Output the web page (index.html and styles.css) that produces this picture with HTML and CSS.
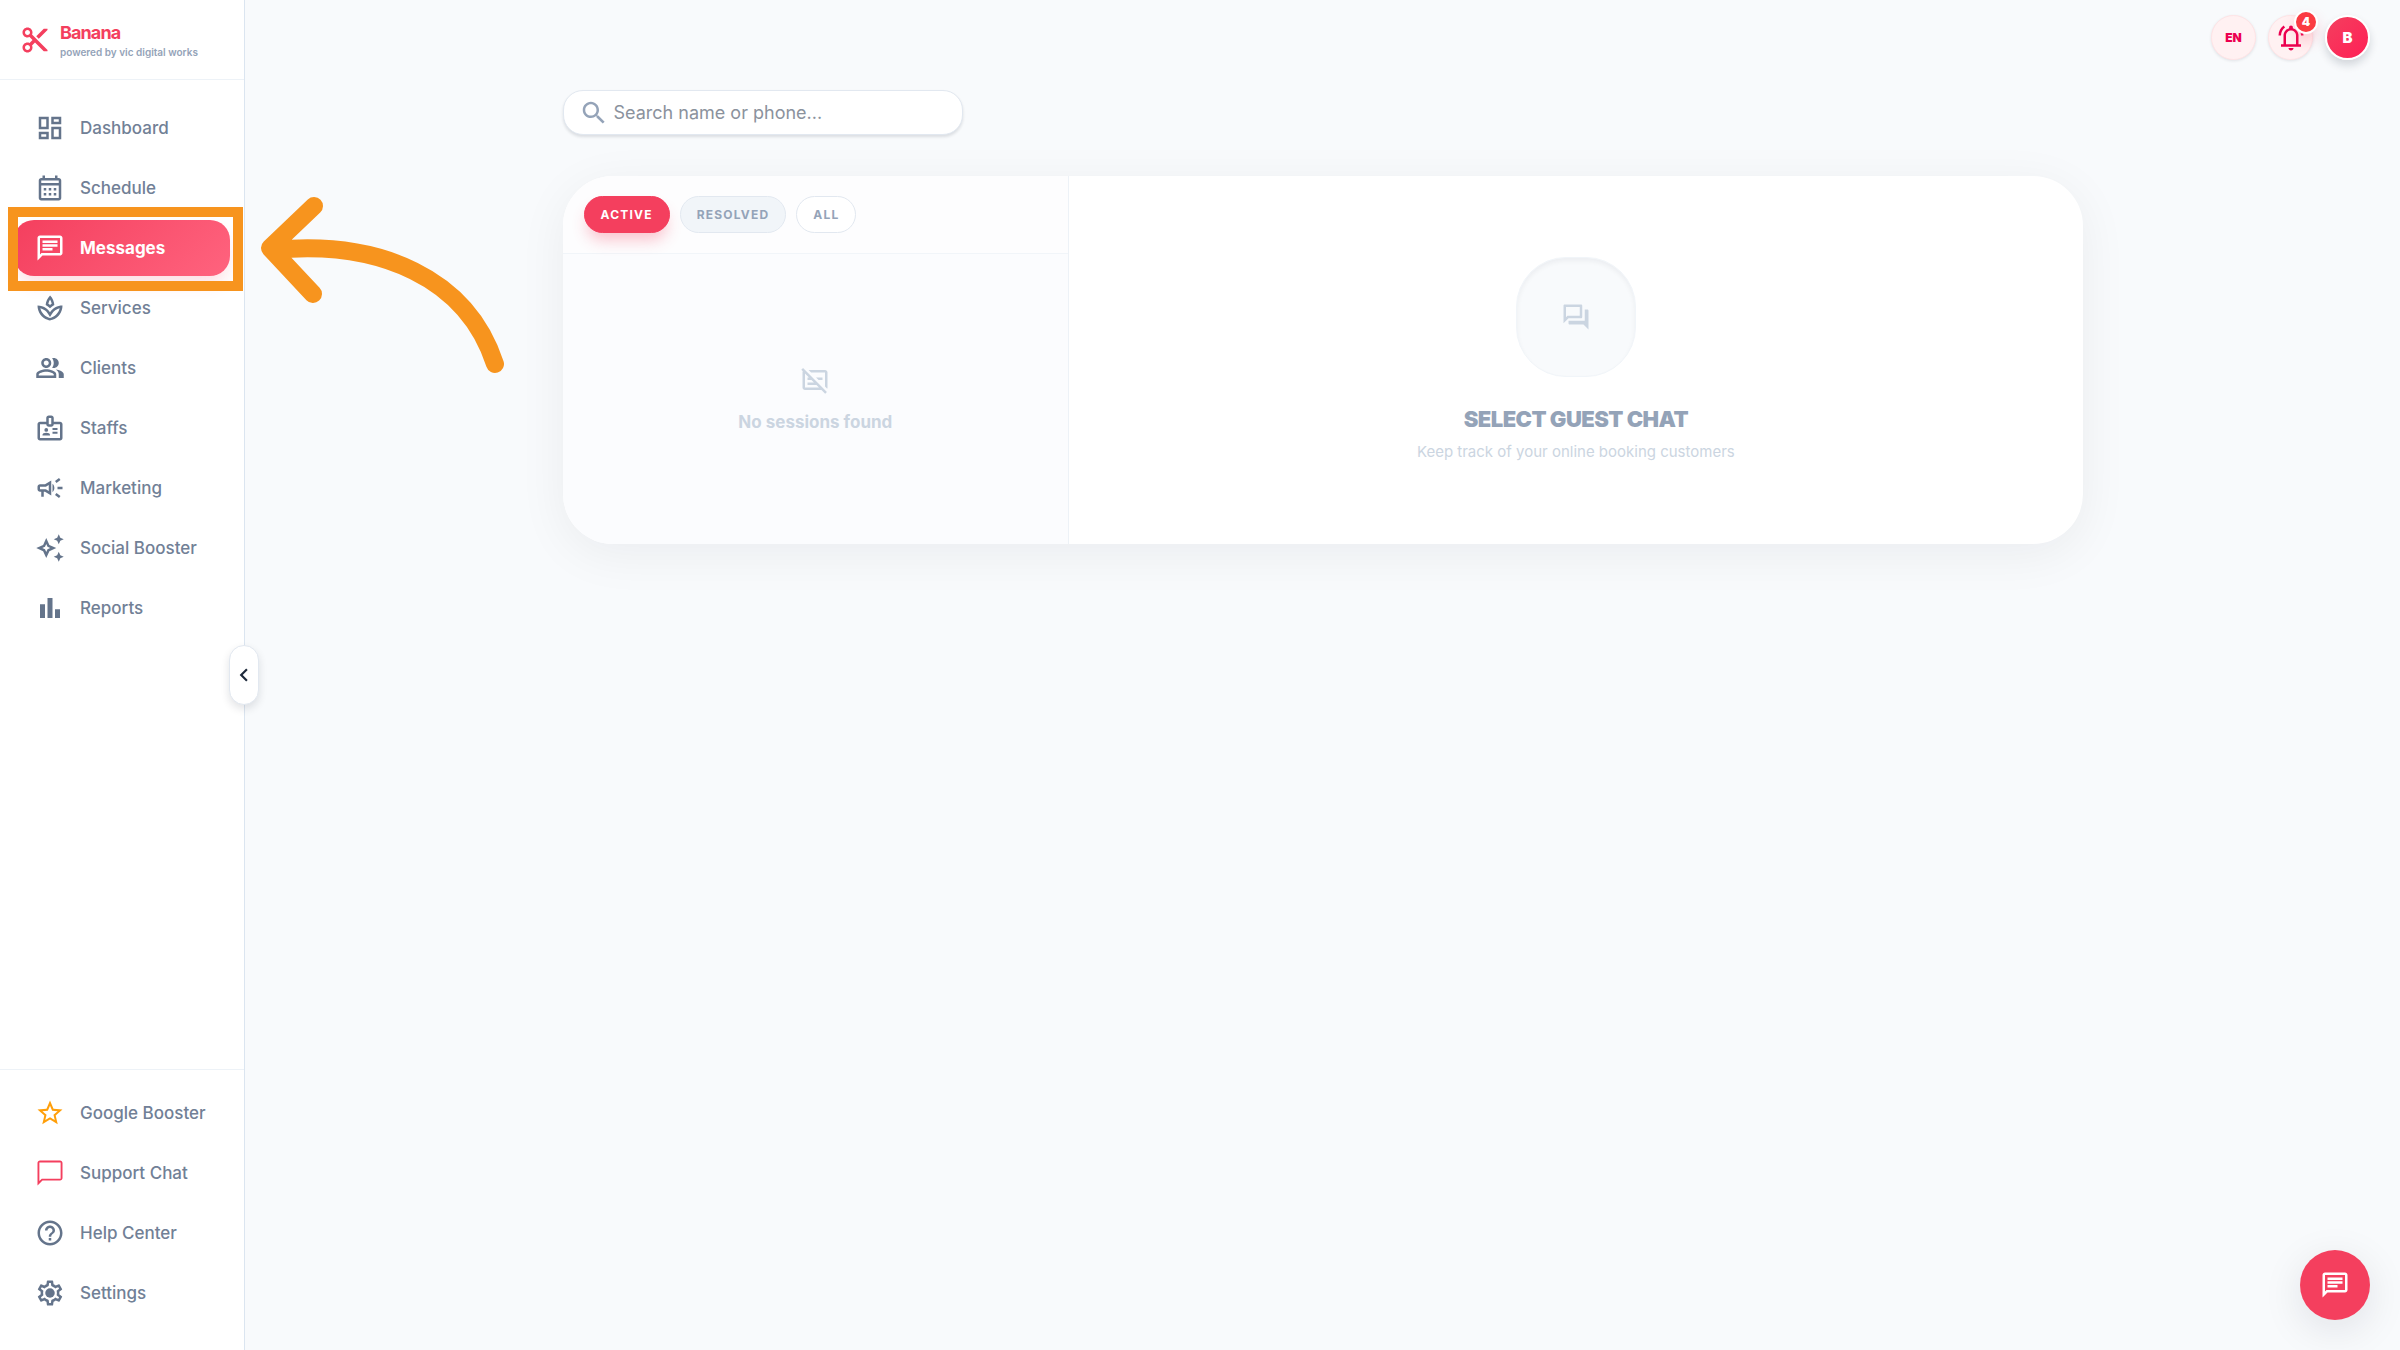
FILE: index.html
```html
<!DOCTYPE html>
<html lang="en">
<head>
<meta charset="utf-8">
<title>Banana – Messages</title>
<link rel="stylesheet" href="styles.css">
</head>
<body>
<div class="app">
  <aside class="sidebar">
    <header class="brand">
      <svg class="icon brand-icon" viewBox="0 0 24 24"><path d="M9.64 7.64c.23-.5.36-1.05.36-1.64 0-2.21-1.79-4-4-4S2 3.790 2 6s1.790 4 4 4c.59 0 1.140-.13 1.640-.36L10 12l-2.360 2.360C7.140 14.130 6.590 14 6 14c-2.210 0-4 1.790-4 4s1.790 4 4 4 4-1.790 4-4c0-.59-.13-1.140-.36-1.640L12 14l7 7h3v-1L9.640 7.640zM6 8c-1.100 0-2-.89-2-2s.9-2 2-2 2 .89 2 2-.9 2-2 2zm0 12c-1.100 0-2-.89-2-2s.9-2 2-2 2 .89 2 2-.9 2-2 2zM19 3l-6 6 2 2 7-7V3z"/></svg>
      <div class="brand-text">
        <strong class="brand-name">Banana</strong>
        <span class="brand-tag">powered by vic digital works</span>
      </div>
    </header>
    <nav class="nav">
      <a class="nav-item" href="#"><svg class="icon" viewBox="0 0 24 24"><path d="M19 5v2h-4V5h4M9 5v6H5V5h4m10 8v6h-4v-6h4M9 17v2H5v-2h4M21 3h-8v6h8V3zM11 3H3v10h8V3zm10 8h-8v10h8V11zm-10 4H3v6h8v-6z"/></svg>Dashboard</a>
      <a class="nav-item" href="#"><svg class="icon" viewBox="0 0 24 24"><path d="M19 4h-1V2h-2v2H8V2H6v2H5c-1.110 0-2 .9-2 2v14c0 1.100.89 2 2 2h14c1.100 0 2-.9 2-2V6c0-1.100-.9-2-2-2zm0 16H5V10h14v10zm0-12H5V6h14v2zM7 12h2v2H7zm4 0h2v2h-2zm4 0h2v2h-2zM7 16h2v2H7zm4 0h2v2h-2zm4 0h2v2h-2z"/></svg>Schedule</a>
      <a class="nav-item active" href="#" aria-current="page"><svg class="icon" viewBox="0 0 24 24"><path d="M4 4h16v12H5.170L4 17.170V4m0-2c-1.100 0-1.990.9-1.990 2L2 22l4-4h14c1.100 0 2-.9 2-2V4c0-1.100-.9-2-2-2H4zm2 10h8v2H6v-2zm0-3h12v2H6V9zm0-3h12v2H6V6z"/></svg>Messages</a>
      <a class="nav-item" href="#"><svg class="icon" viewBox="0 0 24 24"><path d="M15.490 9.630c-.18-2.790-1.310-5.510-3.430-7.630-2.140 2.140-3.320 4.860-3.550 7.630 1.280.68 2.460 1.560 3.490 2.630 1.030-1.060 2.210-1.940 3.490-2.630zm-3.440-4.440c.63 1.030 1.070 2.180 1.300 3.380-.47.3-.91.63-1.340.98-.42-.34-.87-.67-1.330-.97.25-1.200.71-2.350 1.370-3.390zM12 15.450c-.82-1.250-1.860-2.340-3.060-3.200-.13-.09-.27-.16-.4-.26.13.09.27.17.39.25C6.980 10.830 4.590 10 2 10c0 5.320 3.360 9.820 8.030 11.490.63.23 1.290.4 1.970.51.68-.12 1.330-.29 1.970-.51C18.640 19.820 22 15.320 22 10c-4.180 0-7.850 2.170-10 5.450zm1.320 4.150c-.44.15-.88.27-1.330.37-.44-.09-.87-.21-1.280-.36-3.290-1.180-5.700-3.990-6.450-7.350 1.100.26 2.150.71 3.120 1.330l-.02.01c.13.09.26.18.39.25l.07.04c.99.72 1.840 1.610 2.510 2.650L12 19.100l1.670-2.550c.69-1.050 1.550-1.950 2.530-2.660l.07-.05c.09-.05.18-.11.27-.17l-.01-.02c.98-.65 2.070-1.130 3.210-1.400-.75 3.370-3.150 6.180-6.420 7.350z"/></svg>Services</a>
      <a class="nav-item" href="#"><svg class="icon" viewBox="0 0 24 24"><path d="M9 12c2.210 0 4-1.790 4-4s-1.790-4-4-4-4 1.790-4 4 1.790 4 4 4zm0-6c1.100 0 2 .9 2 2s-.9 2-2 2-2-.9-2-2 .9-2 2-2zm0 7c-2.670 0-8 1.340-8 4v3h16v-3c0-2.660-5.330-4-8-4zm6 5H3v-.99C3.200 16.290 6.300 15 9 15s5.800 1.290 6 2v1zm-.52-6.050C14.980 11.980 15 12 15 12c2.210 0 4-1.790 4-4s-1.790-4-4-4c-.47 0-.91.1-1.330.24C14.500 5.270 15 6.580 15 8s-.5 2.730-1.330 3.760zM16.670 13.130C18.040 14.060 19 15.320 19 17v3h4v-3c0-2.180-3.570-3.470-6.330-3.870z"/></svg>Clients</a>
      <a class="nav-item" href="#"><svg class="icon" viewBox="0 0 24 24"><path d="M20 7h-5V4c0-1.100-.9-2-2-2h-2c-1.100 0-2 .9-2 2v3H4c-1.100 0-2 .9-2 2v11c0 1.100.9 2 2 2h16c1.100 0 2-.9 2-2V9c0-1.100-.9-2-2-2zM11 4h2v5h-2V4zm9 16H4V9h5c0 1.100.9 2 2 2h2c1.100 0 2-.9 2-2h5v11z"/><circle cx="9" cy="13.500" r="1.500"/><path d="M11.080 16.180C10.440 15.900 9.740 15.750 9 15.750s-1.440.15-2.080.43c-.56.24-.92.780-.92 1.390V18h6v-.43c0-.61-.36-1.150-.92-1.390zM14 12h4v1.500h-4zm0 3h4v1.500h-4z"/></svg>Staffs</a>
      <a class="nav-item" href="#"><svg class="icon" viewBox="0 0 24 24"><path d="M18 11v2h4v-2h-4zm-2 6.610c.96.71 2.210 1.650 3.200 2.390.4-.53.8-1.070 1.200-1.600-.99-.74-2.240-1.680-3.200-2.400-.4.540-.8 1.080-1.200 1.610zM20.400 5.600c-.4-.53-.8-1.070-1.200-1.600-.99.74-2.240 1.680-3.200 2.400.4.530.8 1.070 1.200 1.600.96-.72 2.210-1.650 3.200-2.400zM4 9c-1.100 0-2 .9-2 2v2c0 1.100.9 2 2 2h1v4h2v-4h1l5 3V6L8 9H4zm5.030 1.710L11 9.530v4.940l-1.970-1.180-.48-.29H4v-2h4.550l.48-.29zM15.500 12c0-1.330-.58-2.530-1.500-3.350v6.690c.92-.81 1.500-2.010 1.500-3.340z"/></svg>Marketing</a>
      <a class="nav-item" href="#"><svg class="icon" viewBox="0 0 24 24"><path d="M19 9l1.250-2.750L23 5l-2.750-1.250L19 1l-1.250 2.750L15 5l2.750 1.250zM19 15l-1.250 2.750L15 19l2.750 1.250L19 23l1.250-2.750L23 19l-2.750-1.250zM11.500 9.500L9 4 6.500 9.500 1 12l5.500 2.500L9 20l2.500-5.500L17 12l-5.500-2.500zm-1.510 3.490L9 15.170l-.99-2.180L5.830 12l2.180-.99L9 8.830l.99 2.180 2.180.99-2.180.99z"/></svg>Social Booster</a>
      <a class="nav-item" href="#"><svg class="icon" viewBox="0 0 24 24"><path d="M4 9h4v11H4zm12 4h4v7h-4zm-6-9h4v16h-4z"/></svg>Reports</a>
    </nav>
    <nav class="nav nav-bottom">
      <a class="nav-item" href="#"><svg class="icon star" viewBox="0 0 24 24"><path d="M22 9.240l-7.190-.62L12 2 9.190 8.630 2 9.240l5.460 4.730L5.820 21 12 17.270 18.180 21l-1.630-7.030L22 9.240zM12 15.400l-3.760 2.270 1-4.280-3.320-2.880 4.380-.38L12 6.100l1.710 4.040 4.380.38-3.320 2.880 1 4.280L12 15.400z"/></svg>Google Booster</a>
      <a class="nav-item" href="#"><svg class="icon rose" viewBox="0 0 24 24"><path d="M20 2H4c-1.100 0-2 .9-2 2v18l4-4h14c1.100 0 2-.9 2-2V4c0-1.100-.9-2-2-2zm.5 14.500H5.400L3.500 18.400V3.500h17v13z"/></svg>Support Chat</a>
      <a class="nav-item" href="#"><svg class="icon" viewBox="0 0 24 24"><path d="M11 18h2v-2h-2v2zm1-16C6.480 2 2 6.480 2 12s4.480 10 10 10 10-4.480 10-10S17.520 2 12 2zm0 18c-4.410 0-8-3.590-8-8s3.590-8 8-8 8 3.590 8 8-3.590 8-8 8zm0-14c-2.210 0-4 1.790-4 4h2c0-1.100.9-2 2-2s2 .9 2 2c0 2-3 1.750-3 5h2c0-2.250 3-2.500 3-5 0-2.210-1.790-4-4-4z"/></svg>Help Center</a>
      <a class="nav-item" href="#"><svg class="icon" viewBox="0 0 24 24"><path d="M19.430 12.980c.04-.32.07-.64.07-.98s-.03-.66-.07-.98l2.110-1.650c.19-.15.24-.42.12-.64l-2-3.460c-.09-.16-.26-.25-.44-.25-.06 0-.12.01-.17.03l-2.490 1c-.52-.4-1.080-.73-1.690-.98l-.38-2.650C14.460 2.180 14.250 2 14 2h-4c-.25 0-.46.18-.49.42l-.38 2.650c-.61.25-1.170.59-1.690.98l-2.490-1c-.06-.02-.12-.03-.18-.03-.17 0-.34.09-.43.25l-2 3.460c-.13.22-.07.49.12.64l2.110 1.650c-.04.32-.07.65-.07.98s.03.66.07.98l-2.110 1.650c-.19.15-.24.42-.12.64l2 3.460c.09.16.26.25.44.25.06 0 .12-.01.17-.03l2.490-1c.52.4 1.080.73 1.690.98l.38 2.650c.03.24.24.42.49.42h4c.25 0 .46-.18.49-.42l.38-2.650c.61-.25 1.170-.59 1.690-.98l2.490 1c.06.02.12.03.18.03.17 0 .34-.09.43-.25l2-3.460c.12-.22.07-.49-.12-.64l-2.110-1.650zm-1.980-1.710c.04.31.05.52.05.73s-.02.43-.05.73l-.14 1.130.89.7 1.080.84-.7 1.210-1.270-.51-1.040-.42-.9.68c-.43.32-.84.56-1.250.73l-1.060.43-.16 1.130-.2 1.350h-1.400l-.19-1.350-.16-1.130-1.060-.43c-.43-.18-.83-.41-1.230-.71l-.91-.7-1.060.43-1.270.51-.7-1.210 1.080-.84.89-.7-.14-1.130c-.03-.31-.05-.54-.05-.74s.02-.43.05-.73l.14-1.130-.89-.7-1.080-.84.7-1.210 1.270.51 1.040.42.9-.68c.43-.32.84-.56 1.250-.73l1.060-.43.16-1.130.2-1.350h1.390l.19 1.350.16 1.130 1.060.43c.43.18.83.41 1.230.71l.91.7 1.060-.43 1.270-.51.7 1.210-1.070.85-.89.7.14 1.130z"/><circle cx="12" cy="12" r="3.800"/></svg>Settings</a>
    </nav>
    <button class="collapse" type="button" aria-label="Collapse sidebar"><svg viewBox="0 0 24 24"><path d="M15.410 7.410L14 6l-6 6 6 6 1.410-1.410L10.830 12z"/></svg></button>
  </aside>

  <main class="main">
    <div class="topbar">
      <button class="round lang" type="button">EN</button>
      <button class="round bell" type="button" aria-label="Notifications">
        <svg class="icon" viewBox="0 0 24 24"><path d="M4 19v-2h2v-7c0-1.380.42-2.610 1.250-3.690.83-1.070 1.920-1.780 3.250-2.110V3.500c0-.42.150-.77.440-1.060S11.580 2 12 2s.77.150 1.060.44.440.64.440 1.060v.7c1.330.33 2.420 1.040 3.250 2.110C17.580 7.390 18 8.620 18 10v7h2v2H4zm8 3c-.55 0-1.020-.2-1.410-.59S10 20.550 10 20h4c0 .55-.2 1.020-.59 1.410S12.550 22 12 22zm-4-5h8v-7c0-1.100-.39-2.040-1.170-2.830C14.040 6.390 13.100 6 12 6s-2.040.39-2.830 1.170C8.390 7.960 8 8.900 8 10v7zM2 10c0-1.670.37-3.200 1.110-4.590A9.760 9.760 0 0 1 6.080 1.950l1.170 1.600a8 8 0 0 0-2.370 2.790A7.800 7.800 0 0 0 4 10H2zm18 0c0-1.320-.29-2.540-.88-3.660a8 8 0 0 0-2.370-2.790l1.170-1.600a9.760 9.760 0 0 1 2.970 3.460C21.630 6.800 22 8.330 22 10h-2z"/></svg>
        <span class="badge">4</span>
      </button>
      <button class="round avatar" type="button">B</button>
    </div>

    <div class="content">
      <label class="search">
        <svg class="icon" viewBox="0 0 24 24"><path d="M15.500 14h-.79l-.28-.27C15.410 12.590 16 11.110 16 9.500 16 5.910 13.090 3 9.500 3S3 5.910 3 9.500 5.910 16 9.500 16c1.610 0 3.090-.59 4.230-1.570l.27.28v.79l5 4.990L20.490 19l-4.990-5zm-6 0C7.010 14 5 11.990 5 9.500S7.010 5 9.500 5 14 7.010 14 9.500 11.990 14 9.500 14z"/></svg>
        <input class="search-input" type="text" placeholder="Search name or phone..." aria-label="Search name or phone">
      </label>

      <section class="card">
        <div class="sessions">
          <div class="filters">
            <button class="chip chip-active" type="button">ACTIVE</button>
            <button class="chip chip-muted" type="button">RESOLVED</button>
            <button class="chip" type="button">ALL</button>
          </div>
          <div class="empty">
            <svg class="icon" viewBox="0 0 24 24"><path d="M20 4H6.830l2 2H20v11.170l1.760 1.760c.15-.28.24-.59.24-.93V6c0-1.100-.9-2-2-2zM1.040 3.870l1.200 1.200C2.090 5.350 2 5.660 2 6v12c0 1.100.9 2 2 2h13.170l2.960 2.960 1.410-1.410L2.450 2.450 1.040 3.870zM4 6.830L7.170 10H6v2h3.170l2 2H6v2h7.170l2 2H4V6.830zM14.830 12H18v-2h-5.170z"/></svg>
            <p class="empty-text">No sessions found</p>
          </div>
        </div>
        <div class="conversation">
          <div class="tile"><svg class="icon" viewBox="0 0 24 24"><path d="M15 4v7H5.170L4 12.170V4h11m1-2H3c-.55 0-1 .45-1 1v14l4-4h10c.55 0 1-.45 1-1V3c0-.55-.45-1-1-1zm5 4h-2v9H6v2c0 .55.45 1 1 1h11l4 4V7c0-.55-.45-1-1-1z"/></svg></div>
          <h2 class="title">SELECT GUEST CHAT</h2>
          <p class="subtitle">Keep track of your online booking customers</p>
        </div>
      </section>
    </div>
  </main>

  <button class="fab" type="button" aria-label="Open chat"><svg class="icon" viewBox="0 0 24 24"><path d="M4 4h16v12H5.170L4 17.170V4m0-2c-1.100 0-1.990.9-1.990 2L2 22l4-4h14c1.100 0 2-.9 2-2V4c0-1.100-.9-2-2-2H4zm2 10h8v2H6v-2zm0-3h12v2H6V9zm0-3h12v2H6V6z"/></svg></button>

  <div class="highlight"></div>
  <svg class="arrow" viewBox="0 0 250 186"><path d="M54 16L10 58L53 104M14 60C120 50 207 88 235 174"/></svg>
</div>
</body>
</html>
```
FILE: styles.css
```css
* { box-sizing: border-box; }

body {
  margin: 0;
  font-family: Inter, "Liberation Sans", sans-serif;
  background: #f8fafc;
  color: #64748b;
}

button { font-family: inherit; cursor: pointer; padding: 0; border: 0; }
p, h2 { margin: 0; }

.app { display: flex; min-height: 100vh; position: relative; }

.icon { width: 30px; height: 30px; fill: currentColor; flex: none; display: block; }

/* Sidebar */
.sidebar {
  position: relative;
  display: flex;
  flex-direction: column;
  flex: none;
  width: 245px;
  background: #fff;
  border-right: 1px solid #dbe5f0;
}

.brand {
  display: flex;
  align-items: center;
  gap: 10px;
  height: 80px;
  padding: 0 20px;
  border-bottom: 1px solid #edf2f7;
}
.brand-icon, .brand-name { color: #f43f5e; }
.brand-text { display: flex; flex-direction: column; white-space: nowrap; }
.brand-name { font-size: 18px; line-height: 24px; font-weight: 700; letter-spacing: -0.05em; }
.brand-tag { font-size: 10px; line-height: 14px; font-weight: 600; color: #94a3b8; }

.nav { display: flex; flex-direction: column; gap: 4px; padding: 20px 14px; }
.nav-bottom { margin-top: auto; padding: 15px 14px 29px; border-top: 1px solid #edf2f7; }

.nav-item {
  display: flex;
  align-items: center;
  gap: 15px;
  height: 56px;
  padding: 0 21px;
  border-radius: 20px;
  font-size: 17px;
  font-weight: 500;
  color: #718096;
  text-decoration: none;
  white-space: nowrap;
}
.nav-item .icon { color: #64748b; }
.nav-item .star { color: #ff9f0a; }
.nav-item .rose { color: #f43f5e; }
.nav-item.active {
  color: #fff;
  font-weight: 700;
  background: linear-gradient(135deg, #f43f5e, #ff637e);
  box-shadow: 0 10px 18px -4px rgba(244, 63, 94, .2);
}
.nav-item.active .icon { color: #fff; }

.collapse {
  position: absolute;
  top: 50%;
  right: -15px;
  display: flex;
  align-items: center;
  justify-content: center;
  width: 30px;
  height: 60px;
  margin-top: -30px;
  background: #fff;
  border: 1px solid #e2e8f0;
  border-radius: 15px;
  box-shadow: 0 4px 8px rgba(15, 23, 42, .12);
  z-index: 1;
}
.collapse svg { width: 26px; height: 26px; flex: none; fill: #1e293b; }

/* Main area */
.main { flex: 1; min-width: 0; }

.topbar {
  display: flex;
  justify-content: flex-end;
  align-items: center;
  gap: 12px;
  height: 75px;
  padding: 0 30px;
}
.round {
  position: relative;
  display: flex;
  align-items: center;
  justify-content: center;
  width: 45px;
  height: 45px;
  border-radius: 50%;
  border: 1px solid #ffe4e6;
  background: #fff1f2;
  color: #ec0050;
  font-weight: 900;
  box-shadow: 0 1px 3px rgba(15, 23, 42, .1);
}
.lang { font-size: 12px; }
.badge {
  position: absolute;
  top: -6px;
  right: -6px;
  width: 24px;
  height: 24px;
  border: 2px solid #fff;
  border-radius: 50%;
  background: #fb3b42;
  color: #fff;
  font-size: 12px;
  line-height: 20px;
  box-shadow: 0 8px 14px rgba(244, 63, 94, .22);
}
.avatar {
  border: 2px solid #fff;
  background: linear-gradient(135deg, #f43f5e, #ff2056);
  color: #fff;
  font-size: 15px;
  box-shadow: 0 5px 9px rgba(15, 23, 42, .16);
}

.content { max-width: 1600px; margin: 0 auto; padding: 15px 40px; }

.search {
  display: flex;
  align-items: center;
  gap: 5px;
  width: 400px;
  height: 45px;
  padding: 0 15px;
  background: #fff;
  border: 1px solid #e2e8f0;
  border-radius: 20px;
  box-shadow: 0 2px 3px rgba(15, 23, 42, .12);
  color: #94a3b8;
}
.search-input {
  flex: 1;
  min-width: 0;
  padding: 0;
  border: 0;
  outline: 0;
  background: none;
  font: 400 18px Inter, "Liberation Sans", sans-serif;
}
.search-input::placeholder { color: #8b929d; }

.card {
  display: grid;
  grid-template-columns: 1fr 2fr;
  margin-top: 41px;
  overflow: hidden;
  border-radius: 50px;
  background: #fff;
  box-shadow: 0 10px 50px rgba(15, 23, 42, .06);
}
.sessions {
  display: flex;
  flex-direction: column;
  background: #fbfcfe;
  border-right: 1px solid #edf2f7;
}
.filters {
  display: flex;
  gap: 10px;
  padding: 20px 21px;
  background: #fdfdfe;
  border-bottom: 1px solid #f1f5f9;
}
.chip {
  height: 37px;
  padding: 0 16px;
  border: 1px solid #e2e8f0;
  border-radius: 20px;
  background: #fff;
  color: #94a3b8;
  font-size: 12px;
  font-weight: 700;
  letter-spacing: 0.1em;
}
.chip-muted { background: #f1f5f9; }
.chip-active {
  background: #f43f5e;
  border-color: #f43f5e;
  color: #fff;
  box-shadow: 0 10px 15px -3px rgba(244, 63, 94, .3);
}
.empty {
  flex: 1;
  display: flex;
  flex-direction: column;
  align-items: center;
  justify-content: center;
  gap: 15px;
  color: #cbd5e1;
}
.empty-text { font-size: 17px; line-height: 24px; font-weight: 700; }

.conversation {
  display: flex;
  flex-direction: column;
  align-items: center;
  padding: 81px 20px;
  text-align: center;
}
.tile {
  display: flex;
  align-items: center;
  justify-content: center;
  width: 120px;
  height: 120px;
  border: 1px solid #f1f5f9;
  border-radius: 50px;
  background: #f8fafc;
  box-shadow: inset 0 3px 5px rgba(15, 23, 42, .05);
  color: #cbd5e1;
}
.title {
  margin-top: 25px;
  font-size: 22px;
  line-height: 34px;
  font-weight: 900;
  letter-spacing: -0.025em;
  color: #94a3b8;
}
.subtitle { margin-top: 5px; font-size: 15px; line-height: 22px; color: #cbd5e1; }

.fab {
  position: fixed;
  right: 30px;
  bottom: 30px;
  display: flex;
  align-items: center;
  justify-content: center;
  width: 70px;
  height: 70px;
  border-radius: 50%;
  background: #f43f5e;
  color: #fff;
  box-shadow: 0 10px 40px rgba(15, 23, 42, .1);
}

/* Tutorial callout over the Messages item */
.highlight {
  position: absolute;
  top: 207px;
  left: 8px;
  width: 235px;
  height: 84px;
  border: 10px solid #f7941e;
}
.arrow {
  position: absolute;
  top: 190px;
  left: 260px;
  width: 250px;
  height: 186px;
  fill: none;
  stroke: #f7941e;
  stroke-width: 18px;
  stroke-linecap: round;
  stroke-linejoin: round;
}
```
